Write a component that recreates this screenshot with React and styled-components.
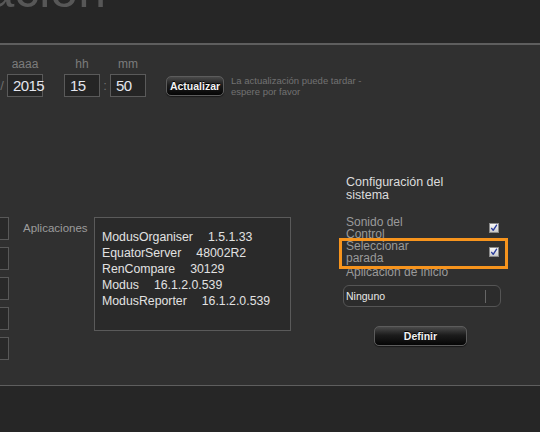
import React from "react";
import styled, { createGlobalStyle } from "styled-components";

const GlobalStyle = createGlobalStyle`
  html, body {
    margin: 0;
    padding: 0;
    background: #262626;
  }
  body {
    font-family: "Liberation Sans", Arial, sans-serif;
  }
`;

const apps = [
  { name: "ModusOrganiser", version: "1.5.1.33" },
  { name: "EquatorServer", version: "48002R2" },
  { name: "RenCompare", version: "30129" },
  { name: "Modus", version: "16.1.2.0.539" },
  { name: "ModusReporter", version: "16.1.2.0.539" },
];

const App = () => {
  return (
    <Screen>
      <GlobalStyle />
      <Header>
        <Title>Configuración</Title>
      </Header>

      <Panel>
        <TimeRow>
          <Sep>/</Sep>
          <Field>
            <FieldLabel>aaaa</FieldLabel>
            <ValueBox>2015</ValueBox>
          </Field>
          <Field $gap={21}>
            <FieldLabel>hh</FieldLabel>
            <ValueBox>15</ValueBox>
          </Field>
          <Sep>:</Sep>
          <Field>
            <FieldLabel>mm</FieldLabel>
            <ValueBox>50</ValueBox>
          </Field>
          <DarkButton $width={58} $left={20}>
            Actualizar
          </DarkButton>
          <Hint>
            La actualización puede tardar -
            <br />
            espere por favor
          </Hint>
        </TimeRow>

        <Body>
          <BoxStack>
            {[0, 1, 2, 3, 4].map((i) => (
              <StubBox key={i} />
            ))}
          </BoxStack>

          <AppsLabel>Aplicaciones</AppsLabel>
          <AppsBox>
            {apps.map((a) => (
              <AppLine key={a.name}>
                {a.name}
                <Version>{a.version}</Version>
              </AppLine>
            ))}
          </AppsBox>

          <Settings>
            <SettingsTitle>Configuración del sistema</SettingsTitle>
            <CheckRow $top={14}>
              <CheckLabel>Sonido del Control</CheckLabel>
              <CheckBox />
            </CheckRow>
            <CheckRow>
              <CheckLabel>Seleccionar parada</CheckLabel>
              <CheckBox />
            </CheckRow>
            <StartLabel>Aplicación de inicio</StartLabel>
            <Select>
              <span>Ninguno</span>
              <SelectDivider />
            </Select>
            <ButtonRow>
              <DarkButton $width={93}>Definir</DarkButton>
            </ButtonRow>
            <Highlight />
          </Settings>
        </Body>
      </Panel>

      <Footer />
    </Screen>
  );
};

const CheckBox = () => (
  <Check>
    <svg width="8" height="8" viewBox="0 0 8 8">
      <path
        d="M1.6 4.4 L3.2 6.3 L6.6 1.2"
        fill="none"
        stroke="#2b3d9c"
        strokeWidth="1.4"
        strokeLinecap="round"
        strokeLinejoin="round"
      />
    </svg>
  </Check>
);

export default App;

const Screen = styled.div`
  width: 540px;
  height: 432px;
  overflow: hidden;
  background: #262626;
  display: flex;
  flex-direction: column;
`;

// page title, scrolled mostly out of view
const Header = styled.div`
  height: 43px;
  flex: none;
  overflow: hidden;
  display: flex;
  justify-content: flex-end;
  width: 106px;
`;

const Title = styled.div`
  margin-top: -35px;
  font-size: 50px;
  line-height: 50px;
  color: #575757;
  white-space: nowrap;
  flex: none;
`;

const Panel = styled.div`
  flex: none;
  height: 340px;
  background: #303030;
  border-top: 2px solid #5e5e5e;
  border-bottom: 1px solid #5e5e5e;
  overflow: hidden;
`;

const TimeRow = styled.div`
  display: flex;
  align-items: flex-end;
  padding-top: 12px;
  margin-left: -3px;
`;

const Field = styled.div`
  display: flex;
  flex-direction: column;
  align-items: center;
  gap: 3px;
  margin-left: ${(p) => p.$gap || 0}px;
`;

const FieldLabel = styled.div`
  font-size: 12px;
  line-height: 14px;
  color: #7c7c7c;
`;

const ValueBox = styled.div`
  box-sizing: border-box;
  width: 36px;
  height: 23px;
  border: 1px solid #5a5a5a;
  background: #252525;
  color: #e4e6ee;
  font-size: 15px;
  letter-spacing: -0.6px;
  line-height: 21px;
  padding-left: 5px;
`;

const Sep = styled.div`
  width: 10px;
  height: 23px;
  line-height: 23px;
  text-align: center;
  font-size: 13px;
  color: #6e6e6e;
`;

const DarkButton = styled.div`
  box-sizing: border-box;
  width: ${(p) => p.$width}px;
  height: 20px;
  margin-left: ${(p) => p.$left || 0}px;
  margin-bottom: 1px;
  border: 1px solid #5c5c5c;
  border-radius: 5px;
  background: linear-gradient(#4a4a4a 0%, #1c1c1c 45%, #050505 100%);
  box-shadow: 0 1px 1px rgba(0, 0, 0, 0.5);
  color: #f2f2f2;
  font-size: 10.5px;
  font-weight: bold;
  line-height: 18px;
  text-align: center;
  text-shadow: 0 -1px 0 #000;
`;

const Hint = styled.div`
  margin-left: 7px;
  font-size: 9.5px;
  line-height: 11px;
  color: #727272;
`;

const Body = styled.div`
  display: flex;
  align-items: flex-start;
  margin-top: 79px;
`;

const BoxStack = styled.div`
  display: flex;
  flex-direction: column;
  gap: 7px;
  margin-left: -21px;
  margin-top: 41px;
`;

const StubBox = styled.div`
  box-sizing: border-box;
  width: 30px;
  height: 23px;
  border: 1px solid #585858;
  background: #292929;
`;

const AppsLabel = styled.div`
  width: 71px;
  margin-left: 14px;
  margin-top: 45px;
  font-size: 11.5px;
  line-height: 14px;
  color: #9c9c9c;
`;

const AppsBox = styled.div`
  box-sizing: border-box;
  width: 197px;
  height: 114px;
  margin-top: 41px;
  border: 1px solid #5a5a5a;
  background: #2a2a2a;
  padding: 11px 7px;
`;

const AppLine = styled.div`
  font-size: 12.3px;
  line-height: 16px;
  color: #e2e2e2;
  white-space: nowrap;
`;

const Version = styled.span`
  margin-left: 15px;
`;

const Settings = styled.div`
  position: relative;
  width: 167px;
  margin-left: 49px;
  display: flex;
  flex-direction: column;
`;

const SettingsTitle = styled.div`
  width: 120px;
  padding-left: 6px;
  font-size: 12.5px;
  line-height: 13px;
  color: #dcdcdc;
`;

const CheckRow = styled.div`
  box-sizing: border-box;
  display: flex;
  align-items: center;
  justify-content: space-between;
  width: 159px;
  padding-left: 6px;
  margin-top: ${(p) => p.$top || 0}px;
`;

const CheckLabel = styled.div`
  width: 85px;
  font-size: 12px;
  line-height: 12px;
  color: #9a9a9a;
`;

const Check = styled.div`
  box-sizing: border-box;
  width: 10px;
  height: 10px;
  border: 1px solid #8a8a8a;
  background: linear-gradient(#fafafa, #c9c9c9);
  display: flex;
  align-items: center;
  justify-content: center;
`;

const StartLabel = styled.div`
  margin-top: 2px;
  padding-left: 6px;
  font-size: 12px;
  line-height: 12px;
  color: #9a9a9a;
`;

const Select = styled.div`
  box-sizing: border-box;
  width: 158px;
  height: 22px;
  margin-top: 7px;
  margin-left: 3px;
  border: 1px solid #555;
  border-radius: 6px;
  background: #2c2c2c;
  display: flex;
  align-items: center;
  justify-content: space-between;
  padding: 0 14px 0 2px;
  font-size: 10.5px;
  color: #e8e8e8;
`;

const SelectDivider = styled.div`
  width: 1px;
  height: 13px;
  background: #666;
`;

const ButtonRow = styled.div`
  margin-top: 19px;
  padding-left: 34px;
  display: flex;
`;

// orange annotation drawn over the settings list
const Highlight = styled.div`
  position: absolute;
  left: -1px;
  top: 62px;
  width: 169px;
  height: 31px;
  box-sizing: border-box;
  border: 3px solid #f7941d;
  pointer-events: none;
`;

const Footer = styled.div`
  flex: 1;
  background: #262626;
`;
